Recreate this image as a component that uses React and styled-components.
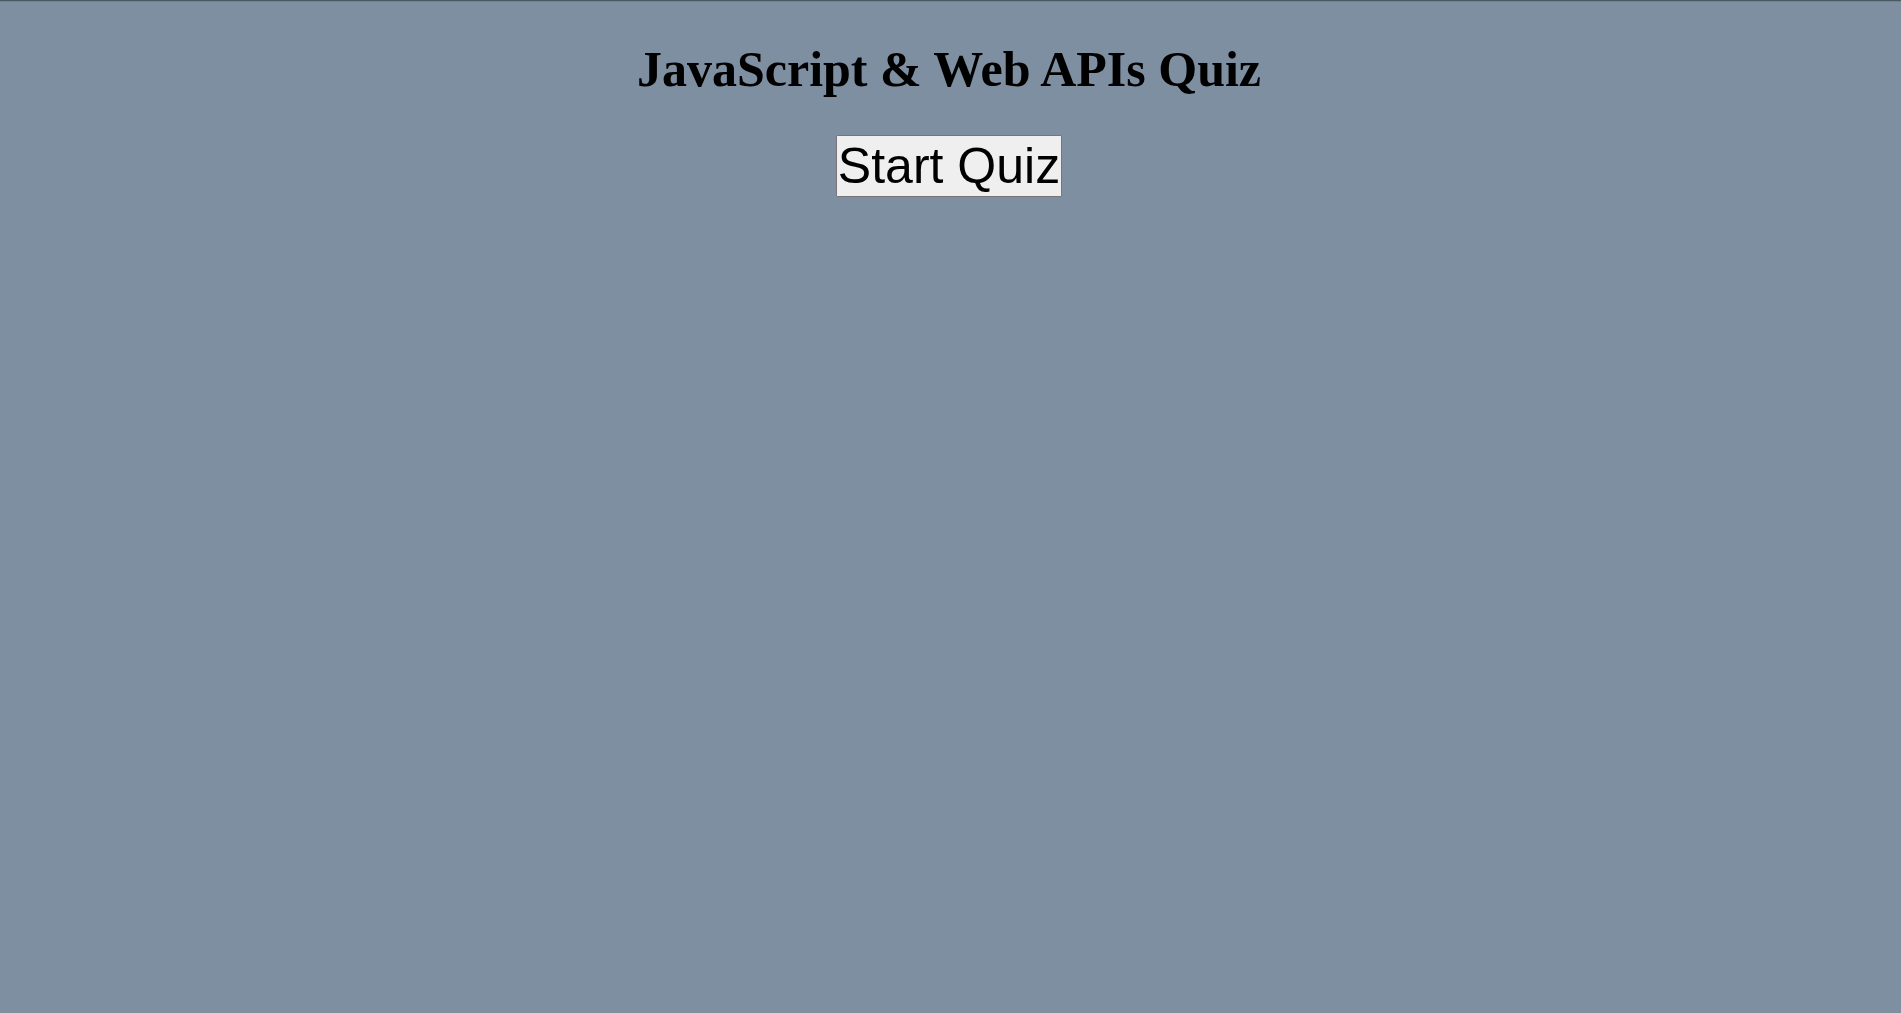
import React from "react";
import styled, { createGlobalStyle } from "styled-components";

const GlobalStyle = createGlobalStyle`
  * {
    margin: 0;
    padding: 0;
    box-sizing: border-box;
  }

  body {
    background: #7e8fa1;
    color: #000;
  }
`;

const Page = styled.main`
  min-height: 100vh;
  display: flex;
  flex-direction: column;
  align-items: center;
  gap: 37px;
  padding: 39px 3px 0 0;
  border-top: 1px solid #4b5a62;
  box-shadow: inset 0 1px 0 #728190;
`;

const Title = styled.h1`
  font: bold 50px/58px "Liberation Serif", "Times New Roman", serif;
  text-align: center;
`;

const StartButton = styled.button`
  padding: 1px;
  border: 1px solid #767676;
  border-radius: 1px;
  background: #efefef;
  color: #000;
  font: 50px/58px "Liberation Sans", Arial, sans-serif;
  cursor: pointer;
`;

export default function App() {
  return (
    <>
      <GlobalStyle />
      <Page>
        <Title>JavaScript &amp; Web APIs Quiz</Title>
        <StartButton type="button">Start Quiz</StartButton>
      </Page>
    </>
  );
}
